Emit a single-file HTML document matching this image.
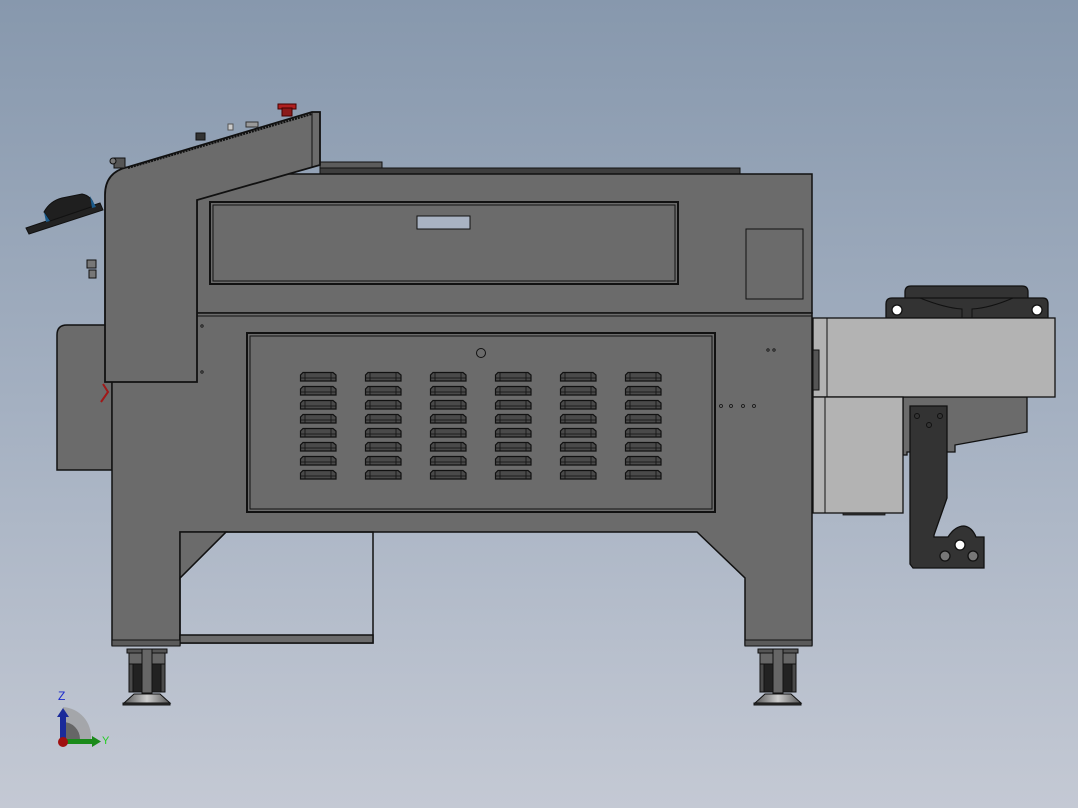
<!DOCTYPE html>
<html><head><meta charset="utf-8"><style>
html,body{margin:0;padding:0;width:1078px;height:808px;overflow:hidden}
body{background:linear-gradient(#8798ad,#a4b0c1 50%,#c4c9d4)}
svg{display:block}
</style></head><body>
<svg width="1078" height="808" viewBox="0 0 1078 808" xmlns="http://www.w3.org/2000/svg">
<defs>
<g id="lv"><path d="M1.5 9 V3 L4 0.5 H34 L37 3 V9 Z" fill="#4a4a4a" stroke="#111" stroke-width="1.2"/><line x1="1.5" y1="6" x2="37" y2="6" stroke="#111" stroke-width="0.8"/><line x1="6" y1="1" x2="6" y2="9" stroke="#111" stroke-width="0.8"/><line x1="32" y1="1" x2="32" y2="9" stroke="#111" stroke-width="0.8"/></g>
<g id="lc"><use href="#lv" y="0"/><use href="#lv" y="14"/><use href="#lv" y="28"/><use href="#lv" y="42"/><use href="#lv" y="56"/><use href="#lv" y="70"/><use href="#lv" y="84"/><use href="#lv" y="98"/></g>
<linearGradient id="ft" x1="0" x2="1"><stop offset="0" stop-color="#555"/><stop offset=".5" stop-color="#ccc"/><stop offset="1" stop-color="#555"/></linearGradient>
</defs>
<g stroke="#111" stroke-width="1.5">
<!-- back left box -->
<path d="M57 470 V335 Q57 325 67 325 H112 V470 Z" fill="#6b6b6b"/>
<!-- top strips -->
<rect x="320" y="162" width="62" height="6" fill="#5c5c5c" stroke-width="1"/>
<rect x="320" y="168" width="420" height="6" fill="#3e3e3e" stroke-width="1"/>
<!-- upper box -->
<rect x="197" y="174" width="615" height="139" fill="#6b6b6b"/>
<rect x="210" y="202" width="468" height="82" fill="#6b6b6b" stroke-width="2"/>
<rect x="213" y="205" width="462" height="76" fill="none" stroke-width="1"/>
<rect x="417" y="216" width="53" height="13" fill="#a9b3c3" stroke-width="1"/>
<rect x="746" y="229" width="57" height="70" fill="#6b6b6b" stroke-width="1"/>
<!-- lower body with legs -->
<path d="M112 313 H812 V645 H745 V578 L697 532 H226 L180 578 V645 H112 Z" fill="#6b6b6b"/>
<line x1="112" y1="316" x2="812" y2="316" stroke-width="1"/>
<rect x="180" y="532" width="193" height="111" fill="none"/>
<rect x="180" y="635" width="193" height="8" fill="#6b6b6b"/>
<path d="M180 532 H226 L180 578 Z" fill="#6b6b6b"/>
<rect x="112" y="640" width="68" height="6" fill="#5a5a5a" stroke-width="1"/>
<rect x="745" y="640" width="67" height="6" fill="#5a5a5a" stroke-width="1"/>
<!-- door -->
<rect x="247" y="333" width="468" height="179" fill="#6b6b6b" stroke-width="2"/>
<rect x="250" y="336" width="462" height="173" fill="none" stroke-width="1"/>
<circle cx="481" cy="353" r="4.5" fill="none" stroke-width="1"/>
</g>
<use href="#lc" x="299" y="372"/><use href="#lc" x="364" y="372"/><use href="#lc" x="429" y="372"/>
<use href="#lc" x="494" y="372"/><use href="#lc" x="559" y="372"/><use href="#lc" x="624" y="372"/>
<g fill="none" stroke="#111" stroke-width="0.8">
<circle cx="721" cy="406" r="1.5"/><circle cx="731" cy="406" r="1.5"/><circle cx="743" cy="406" r="1.5"/><circle cx="754" cy="406" r="1.5"/>
<circle cx="768" cy="350" r="1.2"/><circle cx="774" cy="350" r="1.2"/>
<circle cx="202" cy="326" r="1.2"/><circle cx="202" cy="372" r="1.2"/>
</g>
<!-- left tall cover -->
<path d="M105 382 V195 Q105 172 128 167 L312 112 H320 V165 L197 200 V382 Z" fill="#6b6b6b" stroke="#111" stroke-width="1.8"/>
<line x1="312" y1="112" x2="312" y2="168" stroke="#111" stroke-width="1"/>
<line x1="128" y1="168" x2="312" y2="114" stroke="#111" stroke-width="2" stroke-dasharray="2 1"/>
<path d="M114 158 H125 V168 H114Z" fill="#555" stroke="#111"/>
<circle cx="113" cy="161" r="3" fill="#777" stroke="#111"/>
<rect x="196" y="133" width="9" height="7" fill="#333" stroke="#111"/>
<rect x="228" y="124" width="5" height="6" fill="#ccc" stroke="#555"/>
<rect x="246" y="122" width="12" height="5" fill="#999" stroke="#333"/>
<rect x="278" y="104" width="18" height="5" fill="#b02020" stroke="#400"/>
<rect x="282" y="108" width="10" height="8" fill="#8b1a1a" stroke="#400"/>
<!-- hanging cylinder -->
<path d="M26 228 L100 203 L103 210 L29 234 Z" fill="#222" stroke="#111"/>
<path d="M44 212 Q50 201 62 198 L82 194 Q92 196 94 206 L50 221 Z" fill="#1f1f1f" stroke="#111"/>
<path d="M44 212 L50 221 L46 222 Z M90 196 L96 207 L92 208 Z" fill="#1a5a8a"/>
<rect x="87" y="260" width="9" height="8" fill="#777" stroke="#111"/>
<rect x="89" y="270" width="7" height="8" fill="#777" stroke="#111"/>
<path d="M103 384 L108 392 L101 402" stroke="#a01818" stroke-width="2" fill="none"/>
<!-- right unit -->
<g stroke="#111" stroke-width="1.3">
<path d="M905 300 V292 Q905 286 911 286 H1022 Q1028 286 1028 292 V300 Z" fill="#333"/>
<path d="M886 318 V304 Q886 298 892 298 H1043 Q1048 298 1048 304 V318 Z" fill="#333"/>
<circle cx="897" cy="310" r="5" fill="#fff"/><circle cx="1037" cy="310" r="5" fill="#fff"/>
<path d="M920 298 Q945 308 962 309 V318 M972 318 V309 Q990 308 1013 298" fill="none" stroke-width="1"/>
<path d="M903 397 H1027 V432 L955 445 V452 H907 V455 H903 Z" fill="#6b6b6b"/>
<rect x="813" y="318" width="242" height="79" fill="#b3b3b3"/>
<rect x="813" y="397" width="90" height="116" fill="#b3b3b3"/>
<line x1="827" y1="318" x2="827" y2="397" stroke-width="1"/>
<line x1="825" y1="397" x2="825" y2="513" stroke-width="1"/>
<rect x="813" y="350" width="6" height="40" fill="#555" stroke-width="1"/>
<rect x="843" y="513" width="42" height="2" fill="#333" stroke-width="0.8"/>
<path d="M910 406 H947 V498 L934 535 V537 L948 537 Q955 526 964 526 Q972 527 976 537 H984 V568 L913 568 L910 564 Z" fill="#333"/>
<circle cx="917" cy="416" r="2.5" fill="none" stroke-width="1"/><circle cx="940" cy="416" r="2.5" fill="none" stroke-width="1"/><circle cx="929" cy="425" r="2.5" fill="none" stroke-width="1"/>
<circle cx="960" cy="545" r="5" fill="#fff"/><circle cx="945" cy="556" r="5" fill="#777"/><circle cx="973" cy="556" r="5" fill="#777"/>
</g>
<!-- feet -->
<g stroke="#111" stroke-width="1">
<rect x="127" y="649" width="40" height="4" fill="#555"/>
<rect x="129" y="653" width="36" height="12" fill="#666"/>
<rect x="129" y="664" width="36" height="28" fill="#4a4a4a"/>
<rect x="133" y="664" width="28" height="28" fill="#222"/>
<rect x="142" y="649" width="10" height="44" fill="#666"/>
<path d="M124 703 L134 694 H160 L170 703 Z" fill="url(#ft)"/>
<rect x="123" y="703" width="47" height="2" fill="#333"/>
<rect x="758" y="649" width="40" height="4" fill="#555"/>
<rect x="760" y="653" width="36" height="12" fill="#666"/>
<rect x="760" y="664" width="36" height="28" fill="#4a4a4a"/>
<rect x="764" y="664" width="28" height="28" fill="#222"/>
<rect x="773" y="649" width="10" height="44" fill="#666"/>
<path d="M755 703 L765 694 H791 L801 703 Z" fill="url(#ft)"/>
<rect x="754" y="703" width="47" height="2" fill="#333"/>
</g>
<!-- triad -->
<path d="M65 730 A25 25 0 0 1 90 705" fill="none"/>
<path d="M63 739 V707 A30 30 0 0 1 91 739 Z" fill="#9a9a9a" opacity="0.7"/>
<path d="M63 739 V722 A17 17 0 0 1 80 739 Z" fill="#666"/>
<rect x="60" y="716" width="6" height="24" fill="#1a2a9a"/>
<path d="M57 717 L63 708 L69 717 Z" fill="#1a2a9a"/>
<rect x="64" y="739" width="28" height="5" fill="#1a8a1a"/>
<path d="M92 736 L101 741.5 L92 747 Z" fill="#1a8a1a"/>
<circle cx="63" cy="742" r="5" fill="#a01010"/>
<text x="58" y="700" font-family="Liberation Sans, sans-serif" font-size="12" fill="#1a2acc">Z</text>
<text x="102" y="744" font-family="Liberation Sans, sans-serif" font-size="11" fill="#22cc22">Y</text>
</svg>
</body></html>
